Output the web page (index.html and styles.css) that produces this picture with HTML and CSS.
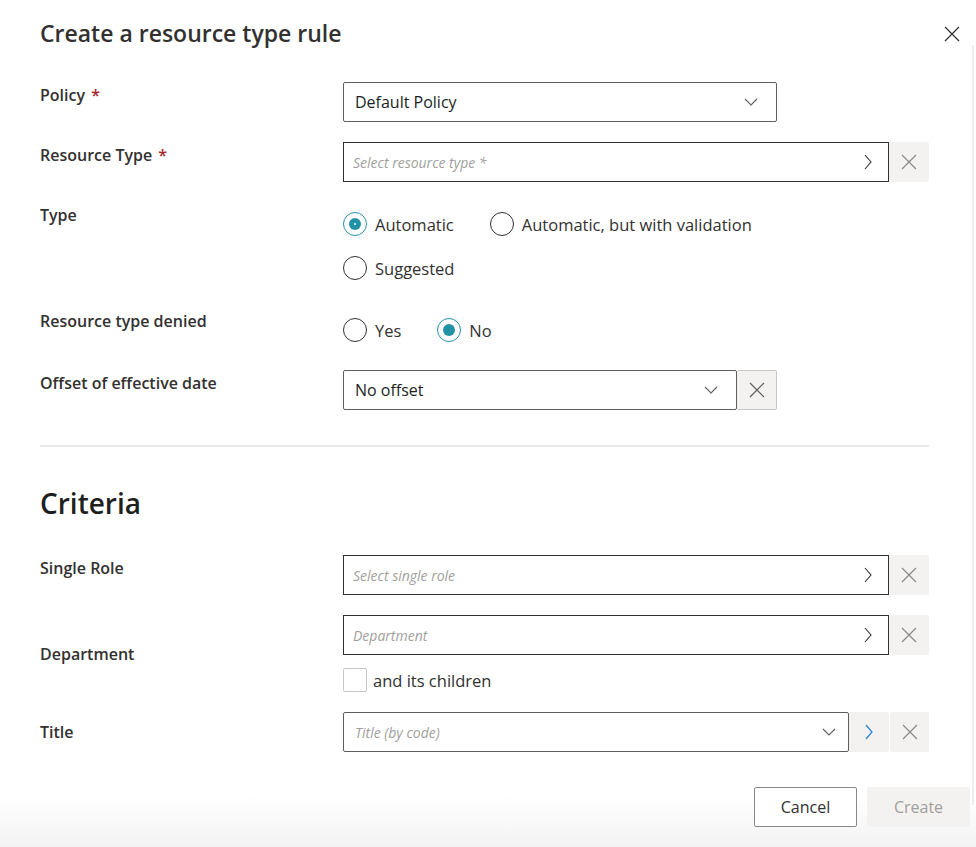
FILE: index.html
```html
<!DOCTYPE html>
<html lang="en">
<head>
<meta charset="utf-8">
<title>Create a resource type rule</title>
<link rel="stylesheet" href="styles.css">
</head>
<body>
<div class="dialog">
  <div class="panel">
    <header class="header">
      <h1 class="title">Create a resource type rule</h1>
      <button class="close" aria-label="Close">
        <svg width="16" height="16" viewBox="0 0 16 16"><path d="M1 1 L15 15 M15 1 L1 15" stroke="#323130" stroke-width="1.2" fill="none"/></svg>
      </button>
    </header>

    <div class="form">
      <div class="label">Policy <span class="req">*</span></div>
      <div class="control">
        <div class="field dropdown w-policy">
          <span class="value">Default Policy</span>
          <svg class="chev-down" width="14" height="8" viewBox="0 0 14 8"><path d="M1 1 L7 7 L13 1" stroke="#605e5c" stroke-width="1.1" fill="none"/></svg>
        </div>
      </div>

      <div class="label">Resource Type <span class="req">*</span></div>
      <div class="control combo">
        <div class="field picker grow">
          <span class="placeholder">Select resource type *</span>
          <svg class="chev-right" width="8" height="16" viewBox="0 0 8 16"><path d="M1 1 L7 8 L1 15" stroke="#323130" stroke-width="1.1" fill="none"/></svg>
        </div>
        <button class="icon-btn"><svg width="16" height="16" viewBox="0 0 16 16"><path d="M1 1 L15 15 M15 1 L1 15" stroke="#8a8886" stroke-width="1.2" fill="none"/></svg></button>
      </div>

      <div class="label">Type</div>
      <div class="control radios">
        <div class="radio-row">
          <label class="radio"><span class="dot checked center"></span>Automatic</label>
          <label class="radio"><span class="dot"></span>Automatic, but with validation</label>
        </div>
        <div class="radio-row">
          <label class="radio"><span class="dot"></span>Suggested</label>
        </div>
      </div>

      <div class="label label-low">Resource type denied</div>
      <div class="control radios">
        <div class="radio-row">
          <label class="radio"><span class="dot"></span>Yes</label>
          <label class="radio"><span class="dot checked"></span>No</label>
        </div>
      </div>

      <div class="label">Offset of effective date</div>
      <div class="control combo">
        <div class="field dropdown w-offset">
          <span class="value">No offset</span>
          <svg class="chev-down" width="14" height="8" viewBox="0 0 14 8"><path d="M1 1 L7 7 L13 1" stroke="#605e5c" stroke-width="1.1" fill="none"/></svg>
        </div>
        <button class="icon-btn bordered"><svg width="16" height="16" viewBox="0 0 16 16"><path d="M1 1 L15 15 M15 1 L1 15" stroke="#605e5c" stroke-width="1.2" fill="none"/></svg></button>
      </div>
    </div>

    <hr class="divider">

    <h2 class="section">Criteria</h2>

    <div class="form">
      <div class="label">Single Role</div>
      <div class="control combo">
        <div class="field picker grow">
          <span class="placeholder">Select single role</span>
          <svg class="chev-right" width="8" height="16" viewBox="0 0 8 16"><path d="M1 1 L7 8 L1 15" stroke="#323130" stroke-width="1.1" fill="none"/></svg>
        </div>
        <button class="icon-btn"><svg width="16" height="16" viewBox="0 0 16 16"><path d="M1 1 L15 15 M15 1 L1 15" stroke="#8a8886" stroke-width="1.2" fill="none"/></svg></button>
      </div>

      <div class="label center">Department</div>
      <div class="control stack">
        <div class="combo">
          <div class="field picker grow">
            <span class="placeholder">Department</span>
            <svg class="chev-right" width="8" height="16" viewBox="0 0 8 16"><path d="M1 1 L7 8 L1 15" stroke="#323130" stroke-width="1.1" fill="none"/></svg>
          </div>
          <button class="icon-btn"><svg width="16" height="16" viewBox="0 0 16 16"><path d="M1 1 L15 15 M15 1 L1 15" stroke="#8a8886" stroke-width="1.2" fill="none"/></svg></button>
        </div>
        <label class="check"><span class="box"></span>and its children</label>
      </div>

      <div class="label center">Title</div>
      <div class="control combo">
        <div class="field dropdown grow title-field">
          <span class="placeholder">Title (by code)</span>
          <svg class="chev-down" width="14" height="8" viewBox="0 0 14 8"><path d="M1 1 L7 7 L13 1" stroke="#605e5c" stroke-width="1.1" fill="none"/></svg>
        </div>
        <button class="icon-btn"><svg width="8" height="16" viewBox="0 0 8 16"><path d="M1 1 L7 8 L1 15" stroke="#2b88d8" stroke-width="1.3" fill="none"/></svg></button>
        <button class="icon-btn"><svg width="16" height="16" viewBox="0 0 16 16"><path d="M1 1 L15 15 M15 1 L1 15" stroke="#8a8886" stroke-width="1.2" fill="none"/></svg></button>
      </div>
    </div>

    <footer class="footer">
      <button class="btn">Cancel</button>
      <button class="btn primary" disabled>Create</button>
    </footer>
  </div>
  <div class="rail"></div>
</div>
</body>
</html>
```

FILE: styles.css
```css
* { box-sizing: border-box; }

html, body {
  margin: 0;
  padding: 0;
}

body {
  width: 976px;
  height: 847px;
  overflow: hidden;
  font-family: "Open Sans", "Noto Sans", sans-serif;
  color: #323130;
  background: linear-gradient(to bottom, #ffffff 0px, #ffffff 795px, #f3f3f3 847px);
}

.dialog {
  display: flex;
  height: 847px;
}

.panel {
  width: 972px;
  padding-left: 40px;
}

.rail {
  width: 2px;
  margin-top: 45px;
  height: 760px;
  background: #eeeeee;
}

.header {
  display: flex;
  justify-content: space-between;
  align-items: flex-start;
  padding-top: 17px;
  height: 82px;
  padding-right: 12px;
}

.title {
  margin: 0;
  font-size: 23px;
  line-height: 32px;
  font-weight: 600;
  color: #323130;
}

.close {
  border: 0;
  background: none;
  padding: 0;
  margin-top: 9px;
  width: 16px;
  height: 16px;
  display: flex;
}

.form {
  display: grid;
  grid-template-columns: 303px 586px;
  row-gap: 20px;
}

.label {
  font-size: 16px;
  font-weight: 600;
  line-height: 22px;
  padding-top: 2px;
  color: #323130;
}

.label.center {
  align-self: center;
  padding-top: 0;
}

.label-low {
  padding-top: 0;
}

.req {
  color: #a4262c;
  margin-left: 2px;
}

.control { display: flex; }

.combo { display: flex; }

.stack {
  flex-direction: column;
  gap: 13px;
}

.field {
  height: 40px;
  border: 1px solid #323130;
  background: #fff;
  display: flex;
  align-items: center;
  justify-content: space-between;
  padding: 0 18px 0 11px;
}

.dropdown {
  border-color: #605e5c;
  border-radius: 2px;
}

.picker {
  padding-left: 9px;
}

.grow { flex: 1; }

.w-policy { width: 434px; }
.w-offset { width: 394px; }

.title-field {
  padding-left: 11px;
  padding-right: 12px;
}

.value {
  font-size: 16px;
  color: #201f1e;
}

.placeholder {
  font-size: 14px;
  font-style: italic;
  color: #a19f9d;
}

.chev-down { display: block; }
.chev-right { display: block; margin-right: -2px; }

.icon-btn {
  width: 40px;
  height: 40px;
  border: 0;
  padding: 0;
  background: #f3f2f1;
  border-radius: 2px;
  display: flex;
  align-items: center;
  justify-content: center;
}

.icon-btn + .icon-btn { margin-left: 1px; width: 39px; }

.icon-btn.bordered {
  border: 1px solid #c8c6c4;
  border-left: 0;
}

.radios {
  flex-direction: column;
}

.radio-row {
  display: flex;
  gap: 36px;
  height: 44px;
  align-items: center;
}

.radios .radio-row:only-child { height: 40px; }

.radio {
  display: flex;
  align-items: center;
  gap: 8px;
  font-size: 16.5px;
  color: #323130;
}

.dot {
  width: 24px;
  height: 24px;
  border-radius: 50%;
  border: 1px solid #323130;
  background: #fff;
  position: relative;
}

.dot.checked {
  border-color: #2293a6;
}

.dot.checked::after {
  content: "";
  position: absolute;
  left: 5px;
  top: 5px;
  width: 12px;
  height: 12px;
  border-radius: 50%;
  background: #2293a6;
}

.dot.center::before {
  content: "";
  position: absolute;
  left: 10px;
  top: 10px;
  width: 2px;
  height: 2px;
  border-radius: 50%;
  background: #fff;
  z-index: 1;
}

.check {
  display: flex;
  align-items: center;
  gap: 6px;
  font-size: 16.5px;
  color: #323130;
}

.box {
  width: 24px;
  height: 24px;
  border: 1px solid #c8c6c4;
  border-radius: 2px;
  background: #fff;
}

.divider {
  margin: 35px 0 0 0;
  width: 889px;
  border: 0;
  height: 2px;
  background: #edebe9;
}

.section {
  margin: 38px 0 34px 0;
  font-size: 28px;
  line-height: 36px;
  font-weight: 600;
  color: #201f1e;
}

.footer {
  display: flex;
  justify-content: flex-end;
  gap: 10px;
  margin-top: 35px;
  padding-right: 2px;
}

.btn {
  width: 103px;
  height: 40px;
  border: 1px solid #8a8886;
  border-radius: 2px;
  background: #fff;
  font-family: inherit;
  font-size: 16px;
  color: #323130;
}

.btn.primary {
  border-color: #f3f2f1;
  background: #f3f2f1;
  color: #a19f9d;
}
```
